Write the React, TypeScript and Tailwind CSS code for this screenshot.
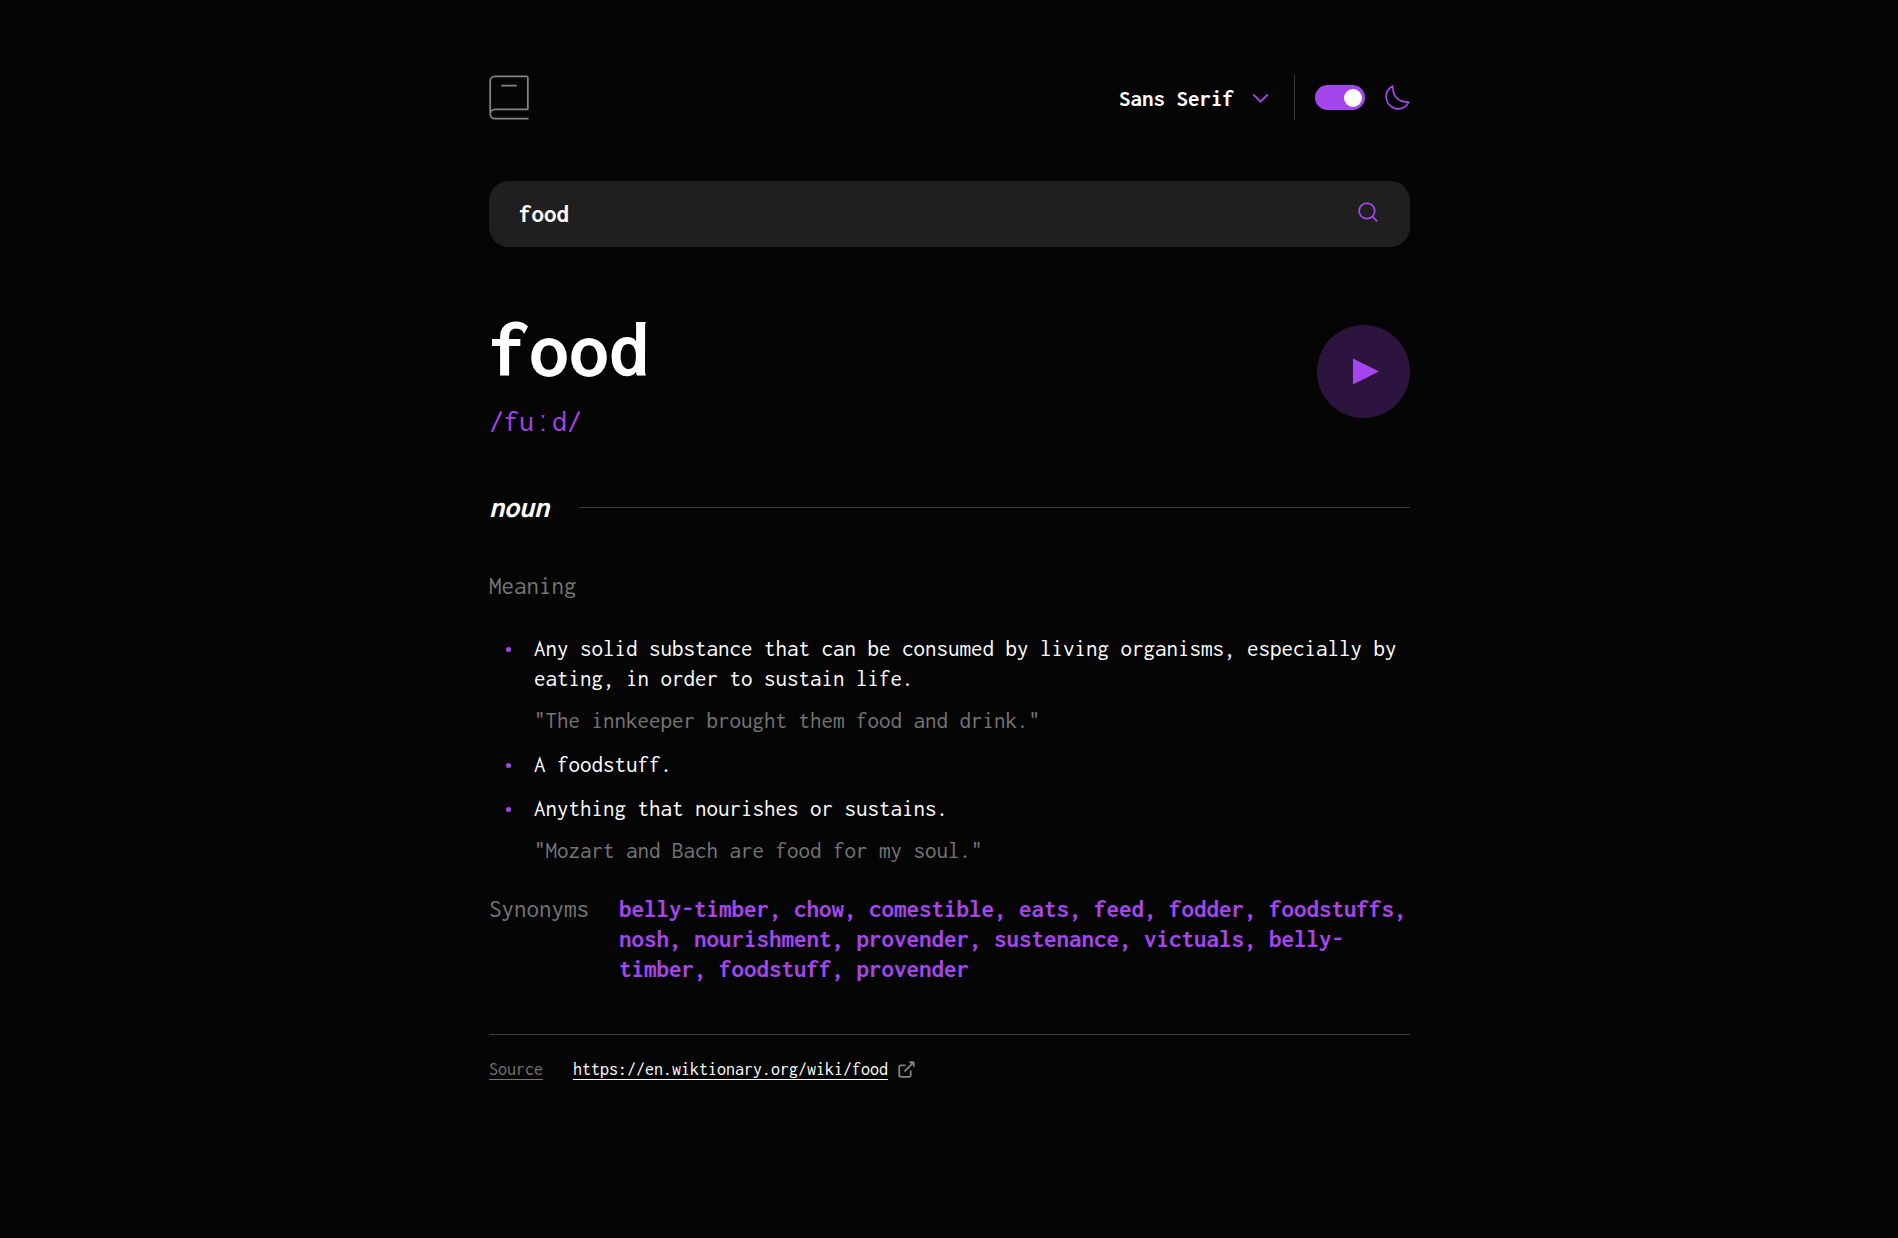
import { useState } from 'react';

type Definition = { text: string; example?: string };

const definitions: Definition[] = [
  {
    text: 'Any solid substance that can be consumed by living organisms, especially by eating, in order to sustain life.',
    example: 'The innkeeper brought them food and drink.',
  },
  { text: 'A foodstuff.' },
  { text: 'Anything that nourishes or sustains.', example: 'Mozart and Bach are food for my soul.' },
];

const synonyms = [
  'belly-timber', 'chow', 'comestible', 'eats', 'feed', 'fodder', 'foodstuffs', 'nosh', 'nourishment',
  'provender', 'sustenance', 'victuals', 'belly-timber', 'foodstuff', 'provender',
];

function BookLogo() {
  return (
    <svg className="h-[45px] w-10" viewBox="0 0 34 38" fill="none" stroke="#838383" strokeWidth="1.5" strokeLinecap="round" aria-hidden="true">
      <path d="M1 33V5a4 4 0 0 1 4-4h26.8A1.2 1.2 0 0 1 33 2.2v26.228M5 29h28M5 37h28M5 37a4 4 0 1 1 0-8" />
      <path d="M11 9h12" />
    </svg>
  );
}

function Header() {
  const [dark, setDark] = useState(true);
  return (
    <header className="flex items-center justify-between">
      <BookLogo />
      <div className="flex items-center">
        <div className="flex items-center gap-[18px]">
          <select
            aria-label="Font"
            className="cursor-pointer appearance-none bg-transparent text-[23px] leading-[30px] font-bold text-white outline-none"
          >
            <option className="bg-[#1f1f1f]">Sans Serif</option>
            <option className="bg-[#1f1f1f]">Serif</option>
            <option className="bg-[#1f1f1f]">Mono</option>
          </select>
          <svg className="pointer-events-none h-[10px] w-[17px]" viewBox="0 0 14 8" fill="none" stroke="#A445ED" strokeWidth="1.5" aria-hidden="true">
            <path d="m1 1 6 6 6-6" />
          </svg>
        </div>
        <div className="mr-5 ml-[25px] h-[45px] w-px bg-[#3a3a3a]" />
        <label className="flex cursor-pointer items-center gap-5">
          <input
            type="checkbox"
            aria-label="Dark mode"
            checked={dark}
            onChange={(e) => setDark(e.target.checked)}
            className="flex h-[25px] w-[50px] cursor-pointer appearance-none items-center rounded-full bg-[#757575] px-[3px] before:size-[18px] before:rounded-full before:bg-white checked:justify-end checked:bg-[#A445ED]"
          />
          <svg className="size-[25px]" viewBox="0 0 22 22" fill="none" stroke="#A445ED" strokeWidth="1.5" strokeLinecap="round" strokeLinejoin="round" aria-hidden="true">
            <path d="M1 10.449a10.544 10.544 0 0 0 19.993 4.686C11.544 15.135 6.858 10.448 6.858 1A10.545 10.545 0 0 0 1 10.449Z" />
          </svg>
        </label>
      </div>
    </header>
  );
}

function SearchBar() {
  const [query, setQuery] = useState('food');
  return (
    <form onSubmit={(e) => e.preventDefault()} className="mt-[61px] flex h-[66px] items-center rounded-[20px] bg-[#1f1f1f] pr-[31px] pl-[30px]">
      <input
        type="text"
        aria-label="Search for a word"
        value={query}
        onChange={(e) => setQuery(e.target.value)}
        className="min-w-0 flex-1 bg-transparent text-[25px] leading-[30px] font-bold text-white outline-none"
      />
      <button type="submit" aria-label="Search" className="cursor-pointer pb-1">
        <svg className="size-[21px]" viewBox="0 0 18 18" fill="none" stroke="#A445ED" strokeWidth="1.5" aria-hidden="true">
          <path d="m12.663 12.663 3.887 3.887M1 7.664a6.665 6.665 0 1 0 13.33 0 6.665 6.665 0 0 0-13.33 0Z" />
        </svg>
      </button>
    </form>
  );
}

function WordHeading() {
  return (
    <div className="mt-15 flex items-center justify-between">
      <div>
        <h1 className="text-[80px] leading-[84px] font-bold">food</h1>
        <p className="mt-[15px] text-[30px] leading-[30px] text-[#A445ED]">/fuːd/</p>
      </div>
      <button type="button" aria-label="Play pronunciation" className="cursor-pointer rounded-full">
        <svg className="size-[93px]" viewBox="0 0 75 75" fill="#A445ED" aria-hidden="true">
          <circle cx="37.5" cy="37.5" r="37.5" opacity=".25" />
          <path d="M29 27v21l21-10.5z" />
        </svg>
      </button>
    </div>
  );
}

export default function App() {
  return (
    <div className="min-h-screen bg-[#050505] pt-[75px] pr-6 pb-20 pl-[25px] font-['Inconsolata','Liberation_Mono',monospace] text-white">
      <div className="mx-auto max-w-[921px]">
        <Header />
        <main>
          <SearchBar />
          <WordHeading />

          <section>
            <div className="mt-[55px] flex items-center gap-[30px]">
              <h2 className="text-[30px] leading-8 font-bold italic">noun</h2>
              <div className="h-px flex-1 bg-[#3a3a3a]" />
            </div>

            <h3 className="mt-12 text-[25px] leading-[30px] text-[#757575]">Meaning</h3>
            <ul className="mt-8 flex flex-col gap-[14px] text-[23px] leading-[30px]">
              {definitions.map((d) => (
                <li key={d.text} className="flex gap-[23px] pl-[17px]">
                  <span className="mt-[14px] size-[5px] shrink-0 rounded-full bg-[#A445ED]" />
                  <div>
                    <p>{d.text}</p>
                    {d.example && <p className="mt-3 text-[#757575]">"{d.example}"</p>}
                  </div>
                </li>
              ))}
            </ul>

            <div className="mt-[29px] flex gap-[30px] text-[25px] leading-[30px]">
              <h3 className="text-[#757575]">Synonyms</h3>
              <p className="font-bold text-[#A445ED]">{synonyms.join(', ')}</p>
            </div>
          </section>
        </main>

        <footer className="mt-[50px] flex items-start border-t border-[#3a3a3a] pt-6 text-[18px] leading-5">
          <span className="mr-[30px] border-b border-[#757575] text-[#757575]">Source</span>
          <a href="https://en.wiktionary.org/wiki/food" className="flex items-center gap-[10px]">
            <span className="border-b border-white">https://en.wiktionary.org/wiki/food</span>
            <svg className="size-[17px]" viewBox="0 0 14 14" fill="none" stroke="#838383" strokeWidth="1.5" aria-hidden="true">
              <path d="M6.09 3.545H2.456A1.455 1.455 0 0 0 1 5v6.545A1.455 1.455 0 0 0 2.455 13H9a1.455 1.455 0 0 0 1.455-1.455V7.91m-5.091.727L13 1m0 0H9.364M13 1v3.636" />
            </svg>
          </a>
        </footer>
      </div>
    </div>
  );
}
